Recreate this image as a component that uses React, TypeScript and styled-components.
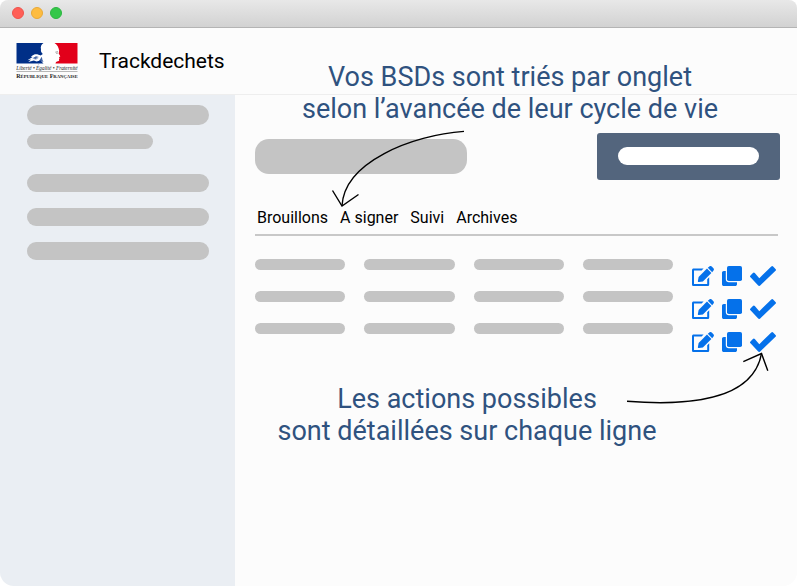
import React from "react";
import styled, { createGlobalStyle } from "styled-components";

const GlobalStyle = createGlobalStyle`
  *, *::before, *::after { box-sizing: border-box; }
  body { margin: 0; background: #ffffff; font-family: Roboto, "Liberation Sans", sans-serif; color: #000000; }
  button { font: inherit; color: inherit; border: 0; padding: 0; background: none; cursor: pointer; }
`;

const Window = styled.div`
  min-height: 100vh;
  display: flex;
  flex-direction: column;
  position: relative;
  overflow: hidden;
  background: #fcfcfc;
  border-radius: 8px 8px 14px 14px;
`;

const TitleBar = styled.div`
  height: 28px;
  display: flex;
  align-items: center;
  gap: 7px;
  padding: 0 12px 1px;
  background: linear-gradient(#e8e8e8, #d2d2d2);
  border-bottom: 1px solid #b4b4b4;
`;

const WindowButton = styled.button<{ $fill: string; $edge: string }>`
  width: 12px;
  height: 12px;
  border-radius: 50%;
  background: ${(p) => p.$fill};
  border: 1px solid ${(p) => p.$edge};
`;

const Header = styled.header`
  height: 67px;
  display: flex;
  align-items: center;
  gap: 21px;
  padding: 0 16px 1px;
  border-bottom: 1px solid #eeeeee;
`;

const Brand = styled.h1`
  margin: 0;
  font-size: 21px;
  line-height: 24px;
  font-weight: 400;
`;

const Body = styled.div`
  flex: 1;
  display: flex;
`;

const Sidebar = styled.nav`
  flex: 0 0 235px;
  display: flex;
  flex-direction: column;
  gap: 16px;
  padding: 10px 26px 0 27px;
  background: #eaeef3;
`;

const SideGroup = styled.div<{ $gap: number }>`
  display: flex;
  flex-direction: column;
  gap: ${(p) => p.$gap}px;
  padding-bottom: 9px;
`;

const SideBar = styled.div<{ $height: number; $short?: boolean }>`
  height: ${(p) => p.$height}px;
  width: ${(p) => (p.$short ? "69%" : "100%")};
  border-radius: 10px;
  background: #c4c4c4;
`;

const Main = styled.main`
  flex: 1;
  min-width: 0;
  padding: 38px 17px 24px 20px;
`;

const TopRow = styled.div`
  display: flex;
  align-items: center;
  justify-content: space-between;
`;

const TitlePill = styled.div`
  width: 212px;
  height: 35px;
  border-radius: 14px;
  background: #c4c4c4;
`;

const PrimaryButton = styled.button`
  width: 183px;
  height: 47px;
  display: flex;
  align-items: center;
  justify-content: center;
  padding-bottom: 1px;
  border-radius: 3px;
  background: #53657d;
`;

const ButtonPill = styled.span`
  width: 141px;
  height: 18px;
  border-radius: 9px;
  background: #ffffff;
`;

const Tabs = styled.div`
  position: relative;
  display: flex;
  gap: 12px;
  margin: 26px 2px 0 0;
  padding: 0 2px 4px;
  border-bottom: 2px solid #c8c8c8;
`;

const Tab = styled.button`
  font-size: 16px;
  line-height: 24px;
`;

const List = styled.section`
  display: flex;
  gap: 19px;
  margin: 23px 4px 0 0;
`;

const Cells = styled.div`
  flex: 1;
  display: grid;
  grid-template-columns: repeat(4, 1fr);
  gap: 21px 19px;
  align-content: start;
`;

const Cell = styled.div`
  height: 11px;
  border-radius: 6px;
  background: #c4c4c4;
`;

const Actions = styled.div`
  position: relative;
  display: flex;
  flex-direction: column;
  gap: 13px;
  padding-top: 7px;
`;

const ActionRow = styled.div`
  display: flex;
  gap: 8px;
  color: #0571ea;
`;

const Action = styled.button`
  display: flex;
`;

const Note = styled.p`
  margin: 0;
  font-size: 27px;
  line-height: 32px;
  text-align: center;
  color: #2f527f;
`;

const TopNote = styled(Note)`
  position: absolute;
  top: 61px;
  left: 235px;
  right: 12px;
`;

const BottomNote = styled(Note)`
  margin: 31px 101px 0 0;
`;

const TabArrow = styled.svg`
  position: absolute;
  left: 75px;
  top: -78px;
  pointer-events: none;
`;

const ActionArrow = styled.svg`
  position: absolute;
  right: 4px;
  top: 92px;
  pointer-events: none;
`;

const Logo = () => (
  <svg width="62" height="38" viewBox="0 0 62 38" role="img" aria-label="République Française">
    <rect x="0.5" y="1" width="61" height="20.600" fill="#fff" />
    <path d="M.5 1H27.500C25.200 2.600 24.300 5 25 7.200C24.600 8.800 25.200 10.400 26.800 12L24.600 13.600C22.500 12.300 20 11.700 17.800 12.700L14.800 14.600L16.600 15L11.500 18.300L15 17.600L12.300 20L17.800 18.600L20.500 19.400L24.500 18.500L27.500 21.600H.5Z" fill="#002f87" />
    <path d="M16.500 16.200L20 14.200L23 14.900L19.500 16.200L22.500 16.800L18 17.800L19.500 16.900Z" fill="#002f87" opacity=".75" />
    <path d="M25.800 14.800L22.800 19.300L27.500 19.800L26.500 18Z" fill="#002f87" opacity=".75" />
    <path d="M38.500 1H61.500V21.600H39.500C39.600 20.400 40.500 19.600 42 19.300C43.200 19 43.500 18.100 42.900 17.200L43.600 16.200L42.900 15.400L44.300 14.300L42.700 11.600L43.200 8.700C42.700 5.500 41.300 2.700 38.500 1Z" fill="#e2001a" />
    <path d="M39.300 10.200L42 9.700M40.200 11.400L41.800 11.200" stroke="#777" strokeWidth=".7" />
    <text x="31" y="28" textAnchor="middle" fontFamily="'Liberation Serif', serif" fontStyle="italic" fontSize="5.300" fill="#222">Liberté • Égalité • Fraternité</text>
    <path d="M.5 29.500H61.500" stroke="#888" strokeWidth=".6" />
    <text x="31" y="36" textAnchor="middle" fontFamily="'Liberation Serif', serif" fontWeight="700" fontSize="6" fill="#222">R<tspan fontSize="4.700">ÉPUBLIQUE</tspan> F<tspan fontSize="4.700">RANÇAISE</tspan></text>
  </svg>
);

const EditIcon = () => (
  <svg width="22" height="20" viewBox="0 0 22 20" fill="currentColor" aria-hidden="true">
    <path d="M11.600 2.500H1.600C.7 2.500 0 3.200 0 4.100V18.400C0 19.300.7 20 1.600 20H15.600C16.500 20 17.200 19.300 17.200 18.400V11.300L15.200 13.300V18H2V4.500H9.600Z" />
    <path d="M15 2.600L19.400 7L10.900 15.400L6.900 16.100C6.200 16.200 5.800 15.800 5.900 15.100L6.600 11.100Z" />
    <path d="M15.800 1.800L17.400.5C18.100-.1 19.100-.1 19.800.6L21.400 2.200C22.100 2.900 22.100 3.900 21.500 4.600L20.200 6.200Z" />
  </svg>
);

const CopyIcon = () => (
  <svg width="20" height="20" viewBox="0 0 20 20" fill="currentColor" aria-hidden="true">
    <rect x="5" width="15" height="15" rx="1.800" />
    <path d="M3.800 5H1.800C.8 5 0 5.800 0 6.800V18.200C0 19.200.8 20 1.800 20H13.200C14.200 20 15 19.200 15 18.200V16.200H6.800C5.100 16.200 3.800 14.900 3.800 13.200Z" />
  </svg>
);

const CheckIcon = () => (
  <svg width="26" height="20" viewBox="0 0 26 20" fill="currentColor" aria-hidden="true">
    <path d="M8.200 19.500L.5 11.300A1.300 1.300 0 0 1 .5 9.400L2.900 7A1.300 1.300 0 0 1 4.800 7L9.300 12.200L21.300.5A1.300 1.300 0 0 1 23.100.5L25.500 2.900A1.300 1.300 0 0 1 25.500 4.800L10.200 19.500A1.400 1.400 0 0 1 8.200 19.500Z" />
  </svg>
);

const sideItems = [1, 2, 3];
const rows = [1, 2, 3];
const cells = Array.from({ length: 12 }, (_, i) => i);
const tabs = ["Brouillons", "A signer", "Suivi", "Archives"];

export default function App() {
  return (
    <>
      <GlobalStyle />
      <Window>
        <TitleBar>
          <WindowButton aria-label="Fermer" $fill="#ff5f57" $edge="#ee534c" />
          <WindowButton aria-label="Réduire" $fill="#fdbc40" $edge="#e8a936" />
          <WindowButton aria-label="Agrandir" $fill="#33c748" $edge="#2bb540" />
        </TitleBar>
        <Header>
          <Logo />
          <Brand>Trackdechets</Brand>
        </Header>
        <Body>
          <Sidebar>
            <SideGroup $gap={9}>
              <SideBar $height={20} />
              <SideBar $height={15} $short />
            </SideGroup>
            <SideGroup $gap={16}>
              {sideItems.map((item) => (
                <SideBar key={item} $height={18} />
              ))}
            </SideGroup>
          </Sidebar>
          <Main>
            <TopRow>
              <TitlePill />
              <PrimaryButton aria-label="Nouveau bordereau">
                <ButtonPill />
              </PrimaryButton>
            </TopRow>
            <Tabs>
              {tabs.map((tab) => (
                <Tab key={tab} type="button">{tab}</Tab>
              ))}
              <TabArrow width="136" height="82" viewBox="0 0 136 82" fill="none" stroke="#000" strokeWidth="1.400" aria-hidden="true">
                <path d="M134 3.400C82 7 14 34 12 78" />
                <path d="M2.500 62.500L12 78L28.500 66.500" />
              </TabArrow>
            </Tabs>
            <List>
              <Cells>
                {cells.map((cell) => (
                  <Cell key={cell} />
                ))}
              </Cells>
              <Actions>
                {rows.map((row) => (
                  <ActionRow key={row}>
                    <Action type="button" aria-label="Modifier"><EditIcon /></Action>
                    <Action type="button" aria-label="Dupliquer"><CopyIcon /></Action>
                    <Action type="button" aria-label="Valider"><CheckIcon /></Action>
                  </ActionRow>
                ))}
                <ActionArrow width="150" height="60" viewBox="0 0 150 60" fill="none" stroke="#000" strokeWidth="1.400" aria-hidden="true">
                  <path d="M5 50.300C64 55 131 50 139.500 2.500" />
                  <path d="M121.300 10.700L139.500 2.500L145.800 19.800" />
                </ActionArrow>
              </Actions>
            </List>
            <BottomNote>
              Les actions possibles
              <br />
              sont détaillées sur chaque ligne
            </BottomNote>
          </Main>
        </Body>
        <TopNote>
          Vos BSDs sont triés par onglet
          <br />
          selon l’avancée de leur cycle de vie
        </TopNote>
      </Window>
    </>
  );
}
